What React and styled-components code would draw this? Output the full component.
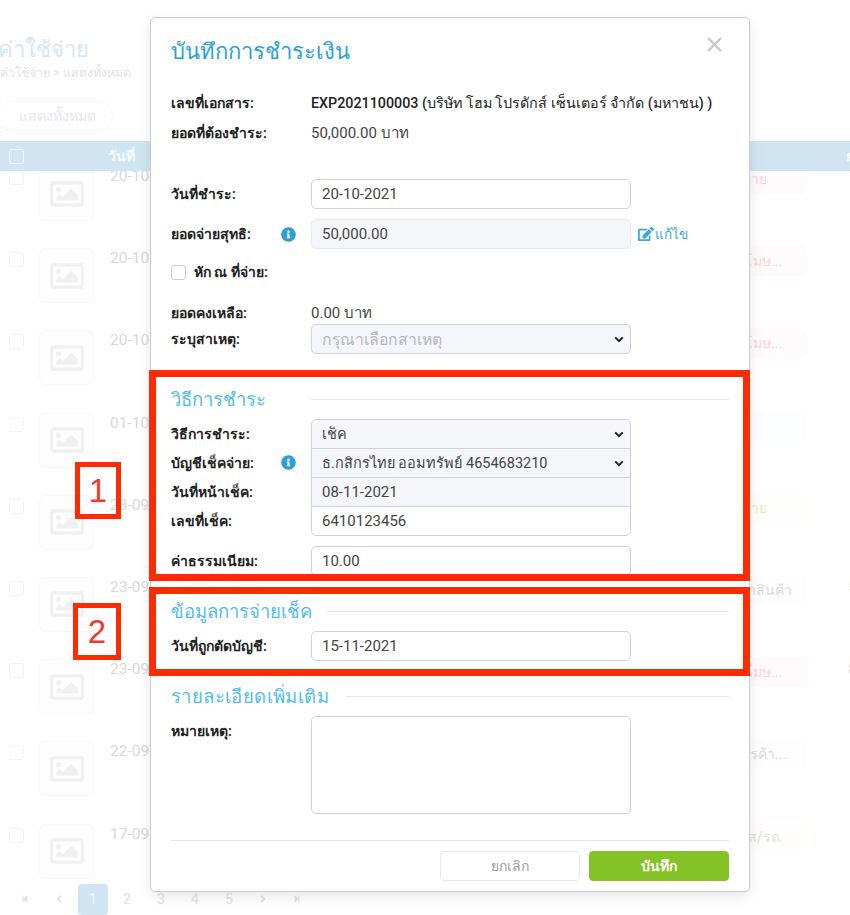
import React from 'react'
import styled, { createGlobalStyle } from 'styled-components'
import { FaRegImage, FaInfoCircle, FaEdit, FaStepBackward, FaStepForward, FaAngleLeft, FaAngleRight } from 'react-icons/fa'

const rows = [
  { date: '20-10-2021', tag: 'ค่าบริการจ่าย', tone: 'pink' },
  { date: '20-10-2021', tag: 'ค่าปรับปะโมษ...', tone: 'pink' },
  { date: '20-10-2021', tag: 'ค่าปรับปะโมษ...', tone: 'pink' },
  { date: '01-10-2021', tag: '', tone: 'blue' },
  { date: '28-09-2021', tag: 'ค่าบริการจ่าย', tone: 'lime' },
  { date: '23-09-2021', tag: 'ต้นทุนราคาสินค้า', tone: 'grey', amount: '5' },
  { date: '23-09-2021', tag: 'ค่าปรับปะโมษ...', tone: 'pink', amount: '8' },
  { date: '22-09-2021', tag: 'ค่าอากรการค้า...', tone: 'grey' },
  { date: '17-09-2021', tag: 'ค่าน้ำมันแส/รถ.', tone: 'cream' },
]

const tones = {
  pink: ['#fffbfc', '#fbd3da'],
  blue: ['#fbfdfe', '#e6f1f8'],
  lime: ['#fefffa', '#e8efc4'],
  grey: ['#fdfdfd', '#dcdcdc'],
  cream: ['#fffefb', '#e2e0da'],
}

const chevron = "url(\"data:image/svg+xml,%3Csvg xmlns='http://www.w3.org/2000/svg' viewBox='0 0 10 7'%3E%3Cpath d='M1.2 1.4L5 5.2L8.8 1.4' fill='none' stroke='%23222' stroke-width='2'/%3E%3C/svg%3E\")"

function App() {
  return (
    <Page>
      <GlobalStyle />
      <Background>
        <PageTitle>ค่าใช้จ่าย</PageTitle>
        <Crumbs>ค่าใช้จ่าย &gt; แสดงทั้งหมด</Crumbs>
        <FilterPill>แสดงทั้งหมด</FilterPill>
        <TableHead>
          <HeadCheck />
          <HeadCell>วันที่</HeadCell>
          <HeadAmount>ยอด</HeadAmount>
        </TableHead>
        <TableBody>
          {rows.map((row, index) => (
            <TableRow key={index}>
              <RowCheck />
              <Thumb><FaRegImage /></Thumb>
              <RowDate>{row.date}</RowDate>
              <TagPill $tone={row.tone}>{row.tag}</TagPill>
              <Amount>{row.amount}</Amount>
            </TableRow>
          ))}
        </TableBody>
        <Pager>
          <PageBtn><FaStepBackward size={8} /></PageBtn>
          <PageBtn><FaAngleLeft size={12} /></PageBtn>
          <PageBtn $active>1</PageBtn>
          <PageBtn>2</PageBtn>
          <PageBtn>3</PageBtn>
          <PageBtn>4</PageBtn>
          <PageBtn>5</PageBtn>
          <PageBtn><FaAngleRight size={12} /></PageBtn>
          <PageBtn><FaStepForward size={8} /></PageBtn>
        </Pager>
      </Background>

      <Modal>
        <ModalHeader>
          <ModalTitle>บันทึกการชำระเงิน</ModalTitle>
          <CloseIcon viewBox="0 0 15 15">
            <path d="M1 1L14 14M14 1L1 14" />
          </CloseIcon>
        </ModalHeader>

        <InfoRow>
          <Label>เลขที่เอกสาร:</Label>
          <Value $strong>EXP2021100003 (บริษัท โฮม โปรดักส์ เซ็นเตอร์ จำกัด (มหาชน) )</Value>
        </InfoRow>
        <InfoRow>
          <Label>ยอดที่ต้องชำระ:</Label>
          <Value>50,000.00 บาท</Value>
        </InfoRow>

        <FieldRow $top={31}>
          <Label>วันที่ชำระ:</Label>
          <Input defaultValue="20-10-2021" />
        </FieldRow>
        <FieldRow $top={10}>
          <Label>
            ยอดจ่ายสุทธิ:
            <InfoIcon />
          </Label>
          <Input $muted readOnly defaultValue="50,000.00" />
          <EditLink><FaEdit size={16} />แก้ไข</EditLink>
        </FieldRow>
        <CheckRow>
          <CheckBox />
          <Label>หัก ณ ที่จ่าย:</Label>
        </CheckRow>
        <BalanceRow>
          <Label>ยอดคงเหลือ:</Label>
          <Value>0.00 บาท</Value>
        </BalanceRow>
        <FieldRow>
          <Label>ระบุสาเหตุ:</Label>
          <Select $placeholder defaultValue="">
            <option value="">กรุณาเลือกสาเหตุ</option>
          </Select>
        </FieldRow>

        <SectionHead $top={33} $gap={45}>วิธีการชำระ</SectionHead>
        <StackGrid>
          <Label>วิธีการชำระ:</Label>
          <StackSelect $first defaultValue="cheque">
            <option value="cheque">เช็ค</option>
          </StackSelect>
          <Label>
            บัญชีเช็คจ่าย:
            <InfoIcon />
          </Label>
          <StackSelect defaultValue="a">
            <option value="a">ธ.กสิกรไทย ออมทรัพย์ 4654683210</option>
          </StackSelect>
          <Label>วันที่หน้าเช็ค:</Label>
          <StackInput $muted readOnly defaultValue="08-11-2021" />
          <Label>เลขที่เช็ค:</Label>
          <StackInput $last defaultValue="6410123456" />
        </StackGrid>
        <FieldRow $top={11}>
          <Label>ค่าธรรมเนียม:</Label>
          <Input defaultValue="10.00" />
        </FieldRow>

        <SectionHead $top={23} $gap={15}>ข้อมูลการจ่ายเช็ค</SectionHead>
        <FieldRow>
          <Label>วันที่ถูกตัดบัญชี:</Label>
          <Input defaultValue="15-11-2021" />
        </FieldRow>

        <SectionHead $top={23} $gap={17} $wide>รายละเอียดเพิ่มเติม</SectionHead>
        <FieldRow>
          <Label $top>หมายเหตุ:</Label>
          <TextArea />
        </FieldRow>

        <Footer>
          <CancelButton>ยกเลิก</CancelButton>
          <SaveButton>บันทึก</SaveButton>
        </Footer>
      </Modal>

      <Marker $x={149} $y={370} $w={601} $h={211} />
      <Marker $x={149} $y={587} $w={601} $h={89} />
      <NumberTag $x={75} $y={462} $w={46} $h={57}>1</NumberTag>
      <NumberTag $x={73} $y={603} $w={48} $h={57}>2</NumberTag>
    </Page>
  )
}

export default App

const GlobalStyle = createGlobalStyle`
  html, body {
    margin: 0;
    padding: 0;
    background: #fff;
  }
  * {
    box-sizing: border-box;
  }
  body {
    font-family: Roboto, "Noto Sans", "Liberation Sans", sans-serif;
  }
`
const Page = styled.div`
  position: relative;
  width: 850px;
  height: 915px;
  overflow: hidden;
  background: #fff;
`
const Background = styled.div`
  display: flex;
  flex-direction: column;
  height: 100%;
  padding-top: 36px;
`
const PageTitle = styled.div`
  font-size: 22px;
  line-height: 28px;
  margin-left: -2px;
  color: #d3e6f4;
`
const Crumbs = styled.div`
  font-size: 12.3px;
  line-height: 16px;
  margin-top: 1px;
  color: #e2e2e2;
`
const FilterPill = styled.div`
  display: flex;
  align-items: center;
  flex: none;
  width: 118px;
  height: 30px;
  margin: 20px 0 10px -5px;
  padding-left: 23px;
  border: 1px solid #f4f6f8;
  border-radius: 15px;
  font-size: 14px;
  color: #dfe8f1;
`
const TableHead = styled.div`
  position: relative;
  z-index: 1;
  display: flex;
  align-items: center;
  flex: none;
  height: 30px;
  padding-left: 9px;
  background: #cfe6f2;
`
const HeadCheck = styled.div`
  flex: none;
  width: 15px;
  height: 15px;
  border: 1px solid #eef7fb;
  border-radius: 3px;
`
const HeadCell = styled.div`
  flex: none;
  width: 100px;
  margin-left: 84px;
  font-size: 14px;
  font-weight: 700;
  color: #f4fafd;
`
const HeadAmount = styled(HeadCell)`
  margin-left: 638px;
`
const TableBody = styled.div`
  flex: none;
  margin-top: -5px;
`
const TableRow = styled.div`
  display: flex;
  align-items: flex-start;
  height: 82.2px;
  padding-left: 9px;
`
const RowCheck = styled.div`
  flex: none;
  width: 15px;
  height: 15px;
  margin-top: 4px;
  border: 1px solid #f2f2f2;
  border-radius: 3px;
`
const Thumb = styled.div`
  display: flex;
  align-items: center;
  justify-content: center;
  flex: none;
  width: 55px;
  height: 55px;
  margin-left: 15px;
  border: 1px solid #f8f8f8;
  border-radius: 6px;
  background: #fdfdfe;
  font-size: 34px;
  color: #f0f0f1;
`
const RowDate = styled.div`
  flex: none;
  width: 568px;
  margin-left: 16px;
  font-size: 15.5px;
  line-height: 20px;
  color: #d9d9d9;
`
const TagPill = styled.div`
  display: flex;
  align-items: center;
  flex: none;
  width: 129px;
  height: 30px;
  margin-top: -2px;
  padding-left: 7px;
  overflow: hidden;
  white-space: nowrap;
  border-radius: 6px;
  font-size: 14px;
  background: ${props => tones[props.$tone][0]};
  color: ${props => tones[props.$tone][1]};
`
const Amount = styled.div`
  margin-left: 41px;
  font-size: 15px;
  line-height: 20px;
  color: #dcdcdc;
`
const Pager = styled.div`
  display: flex;
  flex: none;
  gap: 4px;
  margin-top: -22px;
  padding-left: 10px;
`
const PageBtn = styled.div`
  display: flex;
  align-items: center;
  justify-content: center;
  width: 30px;
  height: 31px;
  border-radius: 4px;
  font-size: 14px;
  background: ${props => (props.$active ? '#cfe6f2' : 'transparent')};
  color: ${props => (props.$active ? '#f4fafd' : '#e2e2e2')};
`
const Modal = styled.div`
  position: absolute;
  z-index: 2;
  top: 17px;
  left: 150px;
  width: 600px;
  height: 875px;
  padding: 0 20px;
  background: #fff;
  border: 1px solid #cbcbdb;
  border-radius: 5px;
  box-shadow: 0 4px 14px rgba(0, 0, 0, 0.1);
`
const ModalHeader = styled.div`
  display: flex;
  align-items: center;
  justify-content: space-between;
  height: 66px;
  margin-bottom: 4px;
`
const ModalTitle = styled.div`
  font-size: 22px;
  color: #2b9fd8;
`
const CloseIcon = styled.svg`
  width: 15px;
  height: 15px;
  margin: -14px 7px 0 0;
  fill: none;
  stroke: #c9c9c9;
  stroke-width: 2.4;
`
const InfoRow = styled.div`
  display: grid;
  grid-template-columns: 140px 1fr;
  align-items: center;
  height: 30px;
`
const Label = styled.div`
  display: flex;
  justify-content: space-between;
  align-items: center;
  padding-right: 15px;
  align-self: ${props => (props.$top ? 'start' : 'center')};
  margin-top: ${props => (props.$top ? '5px' : '0')};
  font-size: 14px;
  line-height: 20px;
  font-weight: 600;
  white-space: nowrap;
  color: #222;
`
const Value = styled.div`
  white-space: nowrap;
  line-height: 20px;
  font-size: ${props => (props.$strong ? '14.3px' : '15px')};
  font-weight: ${props => (props.$strong ? 500 : 400)};
  color: ${props => (props.$strong ? '#222' : '#444')};
`
const FieldRow = styled.div`
  display: grid;
  grid-template-columns: 140px 320px auto;
  align-items: center;
  column-gap: 0;
  margin-top: ${props => props.$top || 0}px;
`
const fieldStyles = `
  display: block;
  width: 320px;
  height: 30px;
  padding: 0 10px;
  border: 1px solid #cfd2da;
  border-radius: 5px;
  outline: none;
  font-family: Roboto, "Noto Sans", "Liberation Sans", sans-serif;
  font-size: 15px;
  color: #444;
`
const Input = styled.input`
  ${fieldStyles}
  background: ${props => (props.$muted ? '#f5f6f9' : '#fff')};
  border-color: ${props => (props.$muted ? '#e6e8ee' : '#cfd2da')};
`
const Select = styled.select`
  ${fieldStyles}
  appearance: none;
  background: #f5f6f9 ${chevron} no-repeat right 6px center / 10px 7px;
  font-size: ${props => (props.$placeholder ? '15.8px' : '14.5px')};
  color: ${props => (props.$placeholder ? '#b5b5c3' : '#444')};
`
const TextArea = styled.textarea`
  ${fieldStyles}
  height: 98px;
  resize: none;
  background: #fff;
`
const InfoIcon = styled(FaInfoCircle)`
  flex: none;
  width: 15px;
  height: 15px;
  color: #2b9fd8;
`
const EditLink = styled.div`
  display: flex;
  align-items: center;
  gap: 1px;
  margin-left: 7px;
  font-size: 13.5px;
  white-space: nowrap;
  color: #3aa8dc;
`
const CheckRow = styled.div`
  display: flex;
  align-items: center;
  gap: 8px;
  height: 30px;
  margin-top: 8px;
`
const CheckBox = styled.div`
  width: 15px;
  height: 15px;
  border: 1px solid #c9ccd4;
  border-radius: 3px;
`
const BalanceRow = styled(InfoRow)`
  height: 23px;
  margin-top: 14px;
`
const SectionHead = styled.div`
  display: flex;
  align-items: center;
  gap: ${props => props.$gap}px;
  height: 24px;
  margin: ${props => props.$top}px 0 8px;
  font-size: 18.5px;
  letter-spacing: ${props => (props.$wide ? '0.4px' : '0')};
  white-space: nowrap;
  color: #4fbde6;
  &::after {
    content: '';
    flex: 1;
    height: 1px;
    background: #e6e6e6;
  }
`
const StackGrid = styled.div`
  display: grid;
  grid-template-columns: 140px 320px;
  grid-auto-rows: 29px;
  align-items: stretch;
`
const StackSelect = styled(Select)`
  height: 30px;
  border-radius: ${props => (props.$first ? '5px 5px 0 0' : '0')};
`
const StackInput = styled(Input)`
  height: 30px;
  border-color: #cfd2da;
  border-radius: ${props => (props.$last ? '0 0 5px 5px' : '0')};
`
const Footer = styled.div`
  display: flex;
  justify-content: flex-end;
  gap: 9px;
  margin-top: 26px;
  padding-top: 10px;
  border-top: 1px solid #e4e4ea;
`
const CancelButton = styled.div`
  display: flex;
  align-items: center;
  justify-content: center;
  width: 140px;
  height: 30px;
  border: 1px solid #e8e8ec;
  border-radius: 4px;
  font-size: 14px;
  color: #9a9a9a;
`
const SaveButton = styled(CancelButton)`
  border-color: #84c225;
  background: #84c225;
  font-weight: 600;
  color: #fff;
`
const Marker = styled.div`
  position: absolute;
  z-index: 3;
  top: ${props => props.$y}px;
  left: ${props => props.$x}px;
  width: ${props => props.$w}px;
  height: ${props => props.$h}px;
  border: 7px solid #fb2c02;
  pointer-events: none;
`
const NumberTag = styled(Marker)`
  display: flex;
  align-items: center;
  justify-content: center;
  border-width: 5px;
  font-family: "Liberation Sans", sans-serif;
  font-size: 33px;
  color: #ee3a2c;
`
